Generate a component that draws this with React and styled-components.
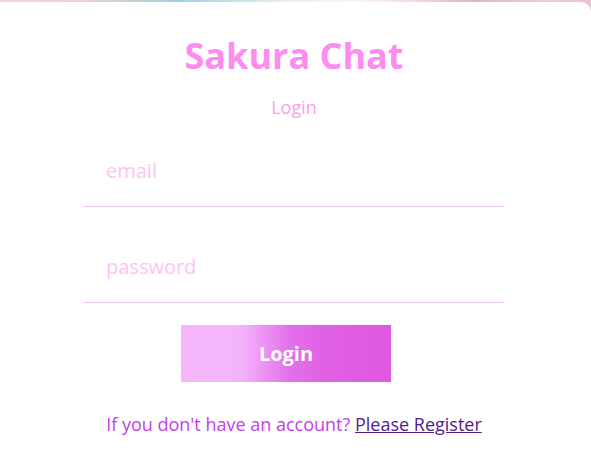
import React from "react";
import styled, { createGlobalStyle } from "styled-components";

const Global = createGlobalStyle`
  html, body { margin: 0; padding: 0; }
  body {
    font-family: "Open Sans", "Noto Sans", sans-serif;
    background: linear-gradient(to right, #f3d6dc 0%, #e8d0d4 15%, #9fd0dc 30%, #c8e2ea 40%, #eeeef8 50%, #fff4ee 60%, #f2dce2 70%, #d8b8c4 80%, #f4ccd8 92%, #e8c4cc 100%);
    overflow: hidden;
  }
`;

const Card = styled.main`
  margin: 2px 0 0 -3px;
  min-height: calc(100vh - 2px);
  background: #ffffff;
  border-top-right-radius: 10px;
  display: flex;
  flex-direction: column;
  align-items: center;
  padding-top: 29px;
  box-sizing: border-box;
`;

const Title = styled.h1`
  margin: 0;
  font-size: 36px;
  font-weight: 700;
  line-height: 49px;
  color: #fd8bf0;
`;

const Subtitle = styled.h2`
  margin: 15px 0 0;
  font-size: 18px;
  font-weight: 400;
  line-height: 25px;
  color: #fd9cf0;
`;

const Form = styled.form`
  margin-top: 21px;
  width: 420px;
  display: flex;
  flex-direction: column;
  align-items: center;
`;

const FieldWrap = styled.div`
  width: 100%;
  border-bottom: 1px solid #efc2fa;
  margin-bottom: ${(p) => p.$gap}px;
`;

const Field = styled.input`
  display: block;
  width: 100%;
  height: 65px;
  box-sizing: border-box;
  border: 0;
  border-radius: 0;
  padding: 16px 22px 22px;
  font-family: "Open Sans", sans-serif;
  font-size: 20px;
  line-height: 27px;
  background: #ffffff;
  outline: none;
  margin: 0;
  &::placeholder { color: #ffc2f5; }
`;

const Button = styled.button`
  width: 210px;
  height: 57px;
  margin-right: 16px;
  border: none;
  font-family: "Open Sans", sans-serif;
  font-size: 20px;
  font-weight: 700;
  color: #ffffff;
  background: linear-gradient(to right, #f5b6fb 0%, #f4b4fb 28%, #e270ea 52%, #e060e4 70%, #df58df 100%);
  cursor: pointer;
`;

const Footer = styled.p`
  margin: 30px 0 0;
  font-size: 18px;
  line-height: 25px;
  color: #c43ee8;
`;

const Link = styled.a`
  color: #551a8b;
  text-decoration: underline;
`;

export default function App() {
  return (
    <>
      <Global />
      <Card>
        <Title>Sakura Chat</Title>
        <Subtitle>Login</Subtitle>
        <Form onSubmit={(e) => e.preventDefault()}>
          <FieldWrap $gap={30}>
            <Field type="email" placeholder="email" />
          </FieldWrap>
          <FieldWrap $gap={22}>
            <Field type="password" placeholder="password" />
          </FieldWrap>
          <Button type="submit">Login</Button>
        </Form>
        <Footer>
          If you don't have an account? <Link href="#">Please Register</Link>
        </Footer>
      </Card>
    </>
  );
}
